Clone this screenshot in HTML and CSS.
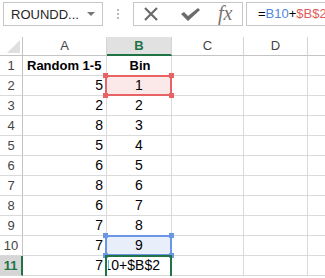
FILE: index.html
```html
<!DOCTYPE html>
<html lang="en">
<head>
    <meta charset="UTF-8" />
    <title>Bin formula</title>
    <link rel="stylesheet" href="styles.css">
</head>
<body>
    <div class="toolbar">
        <div class="namebox">
            <span class="name">ROUNDD...</span>
            <span class="caret"></span>
        </div>
        <div class="grip"><i></i><i></i><i></i></div>
        <div class="fbuttons">
            <svg class="icon" width="16" height="14" viewBox="0 0 16 14">
                <path d="M2 1 L14 13 M14 1 L2 13" stroke="#6b6b6b" stroke-width="2.2" fill="none"/>
            </svg>
            <svg class="icon" width="21" height="13" viewBox="0 0 21 13">
                <path d="M1 6 L4 4 L8 8 L18 0 L20 2 L8 13 Z" fill="#6b6b6b"/>
            </svg>
            <span class="fx">fx</span>
        </div>
        <div class="formula">=<span class="ref-blue">B10</span>+<span class="ref-red">$B$2</span></div>
    </div>

    <div class="sheet">
        <div class="cell corner"><span class="tri"></span></div>
        <div class="cell colhead">A</div>
        <div class="cell colhead active">B</div>
        <div class="cell colhead">C</div>
        <div class="cell colhead">D</div>
        <div class="cell colhead last"></div>

        <div class="cell rowhead">1</div>
        <div class="cell title">Random 1-5</div>
        <div class="cell title center">Bin</div>
        <div class="cell"></div><div class="cell"></div><div class="cell last"></div>

        <div class="cell rowhead">2</div>
        <div class="cell num">5</div>
        <div class="cell center ref red">1<i class="h tl"></i><i class="h tr"></i><i class="h bl"></i><i class="h br"></i></div>
        <div class="cell"></div><div class="cell"></div><div class="cell last"></div>

        <div class="cell rowhead">3</div>
        <div class="cell num">2</div>
        <div class="cell center">2</div>
        <div class="cell"></div><div class="cell"></div><div class="cell last"></div>

        <div class="cell rowhead">4</div>
        <div class="cell num">8</div>
        <div class="cell center">3</div>
        <div class="cell"></div><div class="cell"></div><div class="cell last"></div>

        <div class="cell rowhead">5</div>
        <div class="cell num">5</div>
        <div class="cell center">4</div>
        <div class="cell"></div><div class="cell"></div><div class="cell last"></div>

        <div class="cell rowhead">6</div>
        <div class="cell num">6</div>
        <div class="cell center">5</div>
        <div class="cell"></div><div class="cell"></div><div class="cell last"></div>

        <div class="cell rowhead">7</div>
        <div class="cell num">8</div>
        <div class="cell center">6</div>
        <div class="cell"></div><div class="cell"></div><div class="cell last"></div>

        <div class="cell rowhead">8</div>
        <div class="cell num">6</div>
        <div class="cell center">7</div>
        <div class="cell"></div><div class="cell"></div><div class="cell last"></div>

        <div class="cell rowhead">9</div>
        <div class="cell num">7</div>
        <div class="cell center">8</div>
        <div class="cell"></div><div class="cell"></div><div class="cell last"></div>

        <div class="cell rowhead">10</div>
        <div class="cell num">7</div>
        <div class="cell center ref blue">9<i class="h tl"></i><i class="h tr"></i><i class="h bl"></i><i class="h br"></i></div>
        <div class="cell"></div><div class="cell"></div><div class="cell last"></div>

        <div class="cell rowhead active">11</div>
        <div class="cell num">7</div>
        <div class="cell editing"><span class="edit-clip"><span class="edit-text">=B10+$B$2</span></span></div>
        <div class="cell"></div><div class="cell"></div><div class="cell last"></div>
    </div>
</body>
</html>
```

FILE: styles.css
```css
body {
    margin: 0;
    background: #fff;
    font-family: "Liberation Sans", Arial, sans-serif;
    color: #000;
    overflow: hidden;
}

/* formula bar */
.toolbar {
    display: flex;
    align-items: flex-start;
    height: 37px;
    padding: 2px 0 0 3px;
    box-sizing: border-box;
    white-space: nowrap;
}

.namebox {
    display: flex;
    flex-shrink: 0;
    align-items: center;
    justify-content: space-between;
    width: 100px;
    height: 24px;
    padding: 0 7px 0 7px;
    border: 1px solid #c6c6c6;
    box-sizing: border-box;
    font-size: 13px;
    color: #262626;
}

.caret {
    width: 0;
    height: 0;
    border-left: 4px solid transparent;
    border-right: 4px solid transparent;
    border-top: 4px solid #777;
}

.grip {
    display: flex;
    flex-shrink: 0;
    flex-direction: column;
    gap: 2px;
    margin: 7px 14px 0 14px;
}
.grip i {
    width: 2px;
    height: 2px;
    background: #b8b8b8;
}

.fbuttons {
    display: flex;
    flex-shrink: 0;
    align-items: center;
    width: 110px;
    height: 24px;
    padding-left: 9px;
    border: 1px solid #c6c6c6;
    box-sizing: border-box;
}
.fbuttons .icon {
    display: block;
}
.fbuttons .icon + .icon {
    margin-left: 21px;
}

.fx {
    margin-left: 17px;
    font-family: "Liberation Serif", "Times New Roman", serif;
    font-style: italic;
    font-size: 20px;
    color: #7a7272;
    line-height: 20px;
    margin-top: -2px;
}

.formula {
    flex: 1;
    min-width: 0;
    overflow: hidden;
    height: 24px;
    margin-left: 3px;
    padding-left: 11px;
    border: 1px solid #c6c6c6;
    border-right: none;
    box-sizing: border-box;
    font-size: 13px;
    line-height: 22px;
}

.ref-blue {
    color: #4f86e0;
}
.ref-red {
    color: #e05c5c;
}

/* sheet */
.sheet {
    display: grid;
    grid-template-columns: 23px 84px 65px 72px 64px 1fr;
    grid-template-rows: 19px;
    grid-auto-rows: 20px;
    font-size: 14px;
}

.cell {
    position: relative;
    box-sizing: border-box;
    border-right: 1px solid #dadada;
    border-bottom: 1px solid #dadada;
    line-height: 19px;
    padding: 0 2px;
    white-space: nowrap;
}
.cell.last {
    border-right: none;
}

.corner {
    border-color: #c4c4c4;
}
.tri {
    position: absolute;
    right: 2px;
    bottom: 2px;
    width: 0;
    height: 0;
    border-left: 13px solid transparent;
    border-bottom: 13px solid #dfdfdf;
}

.colhead {
    text-align: center;
    color: #444;
    font-size: 13px;
    line-height: 18px;
    border-right-color: #d4d4d4;
    border-bottom-color: #c4c4c4;
}
.colhead.active {
    background: #e1e1e1;
    color: #217346;
    font-weight: bold;
    border-bottom: 2px solid #217346;
    line-height: 17px;
}

.rowhead {
    text-align: center;
    color: #444;
    font-size: 13px;
    border-right-color: #c4c4c4;
    border-bottom-color: #dadada;
    padding: 0;
}
.rowhead.active {
    background: #d6d6d6;
    color: #217346;
    font-weight: bold;
    border-right: 2px solid #217346;
}

.title {
    font-weight: bold;
    font-size: 13px;
    padding-left: 4px;
}

.num {
    text-align: right;
    padding-right: 3px;
}

.center {
    text-align: center;
}

/* reference highlights */
.ref {
    z-index: 1;
}
.ref::before {
    content: "";
    position: absolute;
    left: -2px;
    top: -1px;
    right: -1px;
    bottom: -1px;
    border: 2px solid;
    z-index: -1;
}
.ref.red::before {
    border-color: #e86464;
    background: #fbe9e9;
}
.ref.blue::before {
    border-color: #6b96e6;
    background: #e9eefb;
}

.h {
    position: absolute;
    width: 5px;
    height: 5px;
}
.red .h {
    background: #e86464;
}
.blue .h {
    background: #6b96e6;
}
.h.tl { left: -4px; top: -3px; }
.h.tr { right: -3px; top: -3px; }
.h.bl { left: -4px; bottom: -3px; }
.h.br { right: -3px; bottom: -3px; }

/* cell in edit mode */
.editing {
    z-index: 1;
    padding: 0 0 0 1px;
}
.editing::before {
    content: "";
    position: absolute;
    left: -2px;
    top: -1px;
    right: -1px;
    bottom: -3px;
    border: 2px solid #217346;
    pointer-events: none;
}
.edit-clip {
    display: flex;
    justify-content: flex-end;
    width: 52px;
    overflow: hidden;
}
.edit-text {
    flex-shrink: 0;
}
```
